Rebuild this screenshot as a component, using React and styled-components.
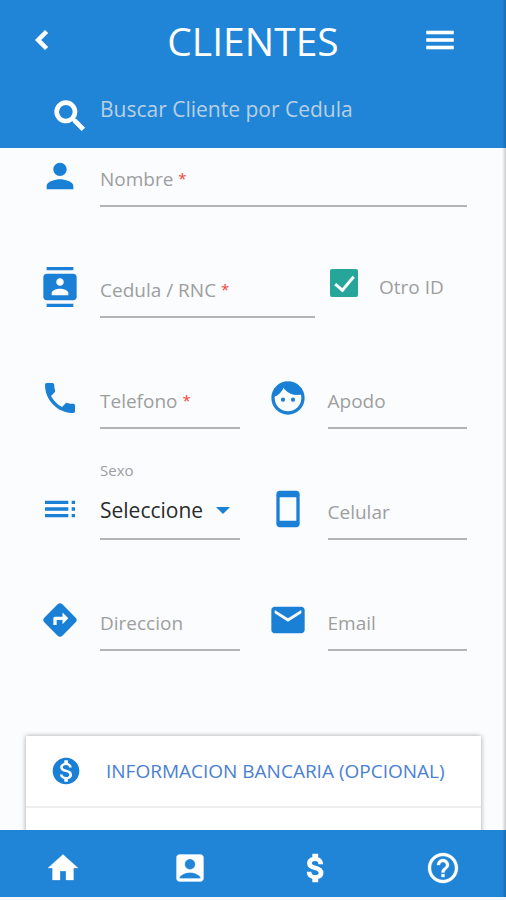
import React, { useState } from "react";
import styled, { createGlobalStyle } from "styled-components";
import {
  MdAccountBox,
  MdAttachMoney,
  MdChevronLeft,
  MdContacts,
  MdDirections,
  MdEmail,
  MdHelpOutline,
  MdHome,
  MdMenu,
  MdMonetizationOn,
  MdPerson,
  MdPhone,
  MdSearch,
  MdStayCurrentPortrait,
  MdToc,
} from "react-icons/md";

const FaceIcon = () => (
  <svg viewBox="0 0 24 24" width="1em" height="1em" fill="currentColor" aria-hidden="true">
    <circle cx="9" cy="13" r="1.25" />
    <circle cx="15" cy="13" r="1.25" />
    <path d="M12 2C6.48 2 2 6.48 2 12s4.48 10 10 10 10-4.48 10-10S17.52 2 12 2zm0 18c-4.41 0-8-3.59-8-8 0-.29.02-.58.05-.86 2.36-1.05 4.23-2.98 5.21-5.37C11.07 8.33 14.05 10 17.42 10c.78 0 1.53-.09 2.25-.26.21.71.33 1.47.33 2.26 0 4.41-3.59 8-8 8z" />
    <path d="M3.4 11.3C3.4 6.4 7.3 3 12 3s8 3 8.400 6.700c-4.400 1.200-8.600-.3-11.100-3.900-1 2.600-3 4.500-5.900 5.500z" />
  </svg>
);

const Field = ({ id, label, required, type = "text", icon }) => {
  const [value, setValue] = useState("");

  return (
    <Cell>
      <FieldIcon>{icon}</FieldIcon>
      <FieldBox>
        <Input
          id={id}
          type={type}
          value={value}
          required={required}
          onChange={(e) => setValue(e.target.value)}
        />
        <Label htmlFor={id} $hidden={value !== ""}>
          {label} {required ? <Star>*</Star> : null}
        </Label>
      </FieldBox>
    </Cell>
  );
};

function App() {
  const [otroId, setOtroId] = useState(true);
  const [sexo, setSexo] = useState("");
  const [open, setOpen] = useState(false);

  return (
    <Page>
      <GlobalStyle />
      <Header>
        <TitleBar>
          <IconButton type="button" aria-label="Volver" $bold><MdChevronLeft /></IconButton>
          <Title>CLIENTES</Title>
          <IconButton type="button" aria-label="Menu"><MdMenu /></IconButton>
        </TitleBar>
        <SearchBar>
          <SearchIcon htmlFor="buscar"><MdSearch /></SearchIcon>
          <SearchInput id="buscar" type="text" aria-label="Buscar Cliente" placeholder="Buscar Cliente por Cedula" />
        </SearchBar>
      </Header>

      <Main>
        <Form onSubmit={(e) => e.preventDefault()}>
          <Row>
            <Field id="nombre" label="Nombre" required icon={<MdPerson />} />
          </Row>
          <Row $columns="275fr 137fr" $gap="15px">
            <Field id="cedula" label="Cedula / RNC" required icon={<MdContacts />} />
            <CheckLabel>
              <Checkbox type="checkbox" checked={otroId} onChange={(e) => setOtroId(e.target.checked)} />
              <span>Otro ID</span>
            </CheckLabel>
          </Row>
          <Row $columns="1fr 1fr" $gap="28px">
            <Field id="telefono" label="Telefono" type="tel" required icon={<MdPhone />} />
            <Field id="apodo" label="Apodo" icon={<FaceIcon />} />
          </Row>
          <Row $columns="1fr 1fr" $gap="28px">
            <Cell>
              <FieldIcon><MdToc /></FieldIcon>
              <FieldBox>
                <FloatingLabel htmlFor="sexo">Sexo</FloatingLabel>
                <Select id="sexo" value={sexo} onChange={(e) => setSexo(e.target.value)}>
                  <option value="">Seleccione</option>
                  <option value="M">Masculino</option>
                  <option value="F">Femenino</option>
                </Select>
                <Caret />
              </FieldBox>
            </Cell>
            <Field id="celular" label="Celular" type="tel" icon={<MdStayCurrentPortrait />} />
          </Row>
          <Row $columns="1fr 1fr" $gap="28px">
            <Field id="direccion" label="Direccion" icon={<MdDirections />} />
            <Field id="email" label="Email" type="email" icon={<MdEmail />} />
          </Row>
        </Form>

        <Card>
          <CardHeader type="button" aria-expanded={open} onClick={() => setOpen(!open)}>
            <MdMonetizationOn />
            <span>INFORMACION BANCARIA (OPCIONAL)</span>
          </CardHeader>
          <CardBody $open={open} />
        </Card>
      </Main>

      <Nav>
        <NavLink href="#inicio" aria-label="Inicio"><MdHome /></NavLink>
        <NavLink href="#clientes" aria-label="Clientes"><MdAccountBox /></NavLink>
        <NavLink href="#prestamos" aria-label="Prestamos" $bold><MdAttachMoney /></NavLink>
        <NavLink href="#ayuda" aria-label="Ayuda"><MdHelpOutline /></NavLink>
      </Nav>
    </Page>
  );
}

const GlobalStyle = createGlobalStyle`
  * {
    box-sizing: border-box;
  }
  body {
    margin: 0;
    background-color: #ffffff;
  }
  body, input, select, button {
    font-family: "Open Sans", "Noto Sans", sans-serif;
  }
`;

const Page = styled.div`
  position: relative;
  display: flex;
  flex-direction: column;
  height: 100vh;
  border-bottom: 3px solid #f4f8fc;
  background-color: #fafcfe;

  &::after {
    content: "";
    position: absolute;
    top: 0;
    right: 0;
    bottom: 0;
    width: 4px;
    background: linear-gradient(to right, rgba(0, 0, 0, 0), rgba(0, 0, 0, 0.2));
    pointer-events: none;
  }
`;

const Header = styled.header`
  flex: none;
  display: flex;
  flex-direction: column;
  gap: 8px;
  padding: 10px 24px 12px;
  background-color: #2085d6;
  color: #ffffff;
`;

const TitleBar = styled.div`
  display: grid;
  grid-template-columns: 60px 1fr 60px;
  align-items: center;
  height: 58px;
`;

const Title = styled.h1`
  margin: 0;
  padding-top: 3px;
  font-size: 39px;
  font-weight: 500;
  line-height: 56px;
  text-align: center;
`;

const IconButton = styled.button`
  display: flex;
  padding: 0;
  border: 0;
  background: none;
  color: inherit;
  font-size: 36px;
  cursor: pointer;

  path:not([fill="none"]) {
    stroke-width: ${(props) => (props.$bold ? 1 : 0.4)};
  }
`;

const SearchBar = styled.div`
  display: flex;
  gap: 10px;
  padding-left: 26px;
`;

const SearchIcon = styled.label`
  display: flex;
  padding-top: 20px;
  font-size: 40px;

  path:not([fill="none"]) {
    stroke-width: 0.8;
  }
`;

const SearchInput = styled.input`
  flex: 1;
  min-width: 0;
  height: 48px;
  margin-top: 9px;
  padding: 0;
  border: 0;
  outline: 0;
  background: none;
  color: #ffffff;
  font-size: 21px;

  &::placeholder {
    color: #b9cfe3;
    opacity: 1;
  }
`;

const Main = styled.main`
  flex: 1;
  min-height: 0;
  overflow-y: auto;
  scrollbar-width: none;
`;

const Form = styled.form`
  display: flex;
  flex-direction: column;
  gap: 52px;
  padding: 0 39px 0 40px;
`;

const Row = styled.div`
  display: grid;
  grid-template-columns: ${(props) => props.$columns || "1fr"};
  column-gap: ${(props) => props.$gap || "0"};
  height: 59px;
`;

const Cell = styled.div`
  display: flex;
  gap: 20px;
  min-width: 0;
`;

const FieldIcon = styled.span`
  flex: none;
  display: flex;
  padding-top: 8px;
  color: #1a80d5;
  font-size: 40px;
`;

/* the label shares the grid area with its input */
const FieldBox = styled.div`
  position: relative;
  flex: 1;
  min-width: 0;
  display: grid;
  grid-template-areas: "field";
  border-bottom: 2px solid #b4b4b6;
`;

const Input = styled.input`
  grid-area: field;
  width: 100%;
  min-width: 0;
  padding: 6px 0 0;
  border: 0;
  outline: 0;
  background: none;
  color: #222222;
  font-size: 19px;
`;

const Label = styled.label`
  grid-area: field;
  align-self: center;
  padding-top: 5px;
  color: #9e9e9e;
  font-size: 19px;
  line-height: 26px;
  white-space: nowrap;
  pointer-events: none;
  visibility: ${(props) => (props.$hidden ? "hidden" : "visible")};
`;

const Star = styled.span`
  color: #f44336;
  font-size: 15px;
  vertical-align: 2px;
  line-height: 1;
`;

const FloatingLabel = styled.label`
  position: absolute;
  top: -21px;
  left: 0;
  color: #9e9e9e;
  font-size: 15px;
  line-height: 20px;
`;

const Select = styled.select`
  grid-area: field;
  width: 100%;
  padding: 0;
  border: 0;
  outline: 0;
  appearance: none;
  background: none;
  color: #2a2a2a;
  font-size: 21px;
`;

const Caret = styled.span`
  grid-area: field;
  place-self: center end;
  margin: 2px 10px 0 0;
  border: 7px solid transparent;
  border-top-color: #1a80d5;
  border-bottom: 0;
  pointer-events: none;
`;

const CheckLabel = styled.label`
  display: flex;
  align-items: flex-start;
  gap: 21px;
  padding-top: 10px;
  color: #9e9e9e;
  font-size: 19px;
  line-height: 36px;
  white-space: nowrap;
`;

const Checkbox = styled.input`
  flex: none;
  display: grid;
  place-items: center;
  width: 28px;
  height: 28px;
  margin: 0;
  appearance: none;
  border: 2px solid #26a69a;
  border-radius: 2px;

  &:checked {
    background-color: #26a69a;
  }

  &:checked::after {
    content: "";
    width: 8px;
    height: 16px;
    margin-bottom: 4px;
    border: solid #ffffff;
    border-width: 0 3px 3px 0;
    transform: rotate(40deg);
  }
`;

const Card = styled.section`
  margin: 85px 25px 24px 26px;
  background-color: #ffffff;
  box-shadow: 0 0 5px rgba(0, 0, 0, 0.35);
`;

const CardHeader = styled.button`
  display: flex;
  align-items: center;
  gap: 24px;
  width: 100%;
  height: 72px;
  padding: 0 24px;
  border: 0;
  border-bottom: 2px solid #eeeeee;
  background: none;
  color: #4a80d4;
  font-size: 19px;
  white-space: nowrap;
  cursor: pointer;

  svg {
    flex: none;
    color: #1a80d5;
    font-size: 32px;
  }
`;

const CardBody = styled.div`
  height: ${(props) => (props.$open ? "240px" : "72px")};
`;

const Nav = styled.nav`
  flex: none;
  display: grid;
  grid-template-columns: repeat(4, 1fr);
  height: 67px;
  padding-top: 8px;
  background-color: #2085d6;
`;

const NavLink = styled.a`
  display: flex;
  align-items: center;
  justify-content: center;
  color: #ffffff;
  font-size: 36px;

  path:not([fill="none"]) {
    stroke-width: ${(props) => (props.$bold ? 0.9 : 0.2)};
  }
`;

export default App;
